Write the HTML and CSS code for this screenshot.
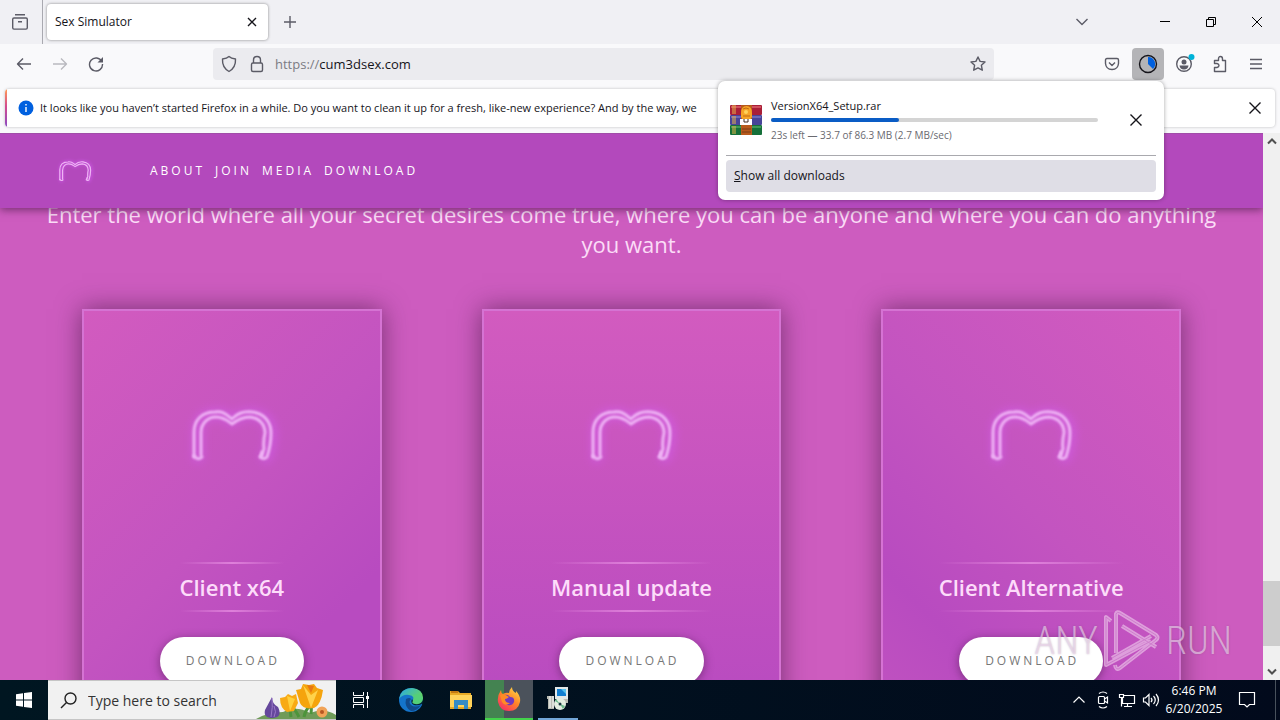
FILE: index.html
```html
<!DOCTYPE html>
<html lang="en">
<head>
<meta charset="utf-8">
<title>Sex Simulator</title>
<link rel="stylesheet" href="styles.css">
</head>
<body>
<svg class="defs" width="0" height="0" aria-hidden="true">
  <symbol id="emblem" viewBox="0 0 110 90">
    <g fill="none" stroke-linejoin="round" stroke-linecap="round">
      <path class="glow" d="M21 67V41Q21 25 38 24Q49 23 55 31Q63 23 75 24Q94 26 94 44Q94 57 89 67"/>
      <path class="neon" d="M17 67V42C17 30 25 22 38 22C47 21 50 25 55 29C60 24 65 21 75 22C87 23 94 32 94 43C94 55 92 61 90 67Q87 70 83 67Q85 66 85 62"/>
      <path class="neon" d="M24 65V43C24 32 32 27 39 27C47 27 51 31 55 34C60 30 65 27 73 27C82 28 88 34 88 43Q86 51 87 59L84 66M17 66Q21 71 25 67"/>
    </g>
  </symbol>
</svg>

<div class="tabs">
  <button class="ib recent" aria-label="View recent browsing"><svg width="18" height="18" viewBox="0 0 18 18"><path d="M4 1.700h10M3 5h12q1.300 0 1.300 1.300v8.500q0 1.300-1.300 1.300H3q-1.300 0-1.300-1.300V6.300Q1.700 5 3 5zM7 8.700h4"/></svg></button>
  <div class="tab"><span>Sex Simulator</span><button class="ib" aria-label="Close tab"><svg width="10" height="10" viewBox="0 0 10 10"><path class="black" d="M1 1l8 8M9 1L1 9"/></svg></button></div>
  <button class="ib plus" aria-label="New tab"><svg width="12" height="12" viewBox="0 0 12 12"><path d="M6 0v12M0 6h12"/></svg></button>
  <button class="ib list" aria-label="List all tabs"><svg width="12" height="8" viewBox="0 0 12 8"><path d="M.5 1L6 6.500 11.500 1"/></svg></button>
  <button class="ib win" aria-label="Minimize"><svg width="10" height="10" viewBox="0 0 10 10"><path class="thin" d="M0 4.500h10"/></svg></button>
  <button class="ib win" aria-label="Restore"><svg width="10" height="10" viewBox="0 0 10 10"><path class="thin" d="M.5 2.500h7v7h-7zM2.500 2.500v-2h7v7h-2"/></svg></button>
  <button class="ib win" aria-label="Close"><svg width="10" height="10" viewBox="0 0 10 10"><path class="thin" d="M0 0l10 10M10 0L0 10"/></svg></button>
</div>

<div class="toolbar">
  <button class="ib nav" aria-label="Back"><svg width="16" height="14" viewBox="0 0 16 14"><path d="M15 7H1.500M7 1.500L1.500 7 7 12.500"/></svg></button>
  <button class="ib nav dim" aria-label="Forward"><svg width="16" height="14" viewBox="0 0 16 14"><path d="M1 7h13.500M9 1.500L14.500 7 9 12.500"/></svg></button>
  <button class="ib nav" aria-label="Reload"><svg width="16" height="16" viewBox="0 0 16 16"><path d="M13.800 5.500A6.500 6.500 0 1 0 14.500 8"/><path d="M15 1v5.500H9.500z" class="fill"/></svg></button>
  <div class="urlbar">
    <svg width="16" height="18" viewBox="0 0 16 18"><path d="M8 1.500Q10 3.500 14.500 4Q15 12.500 8 16.500Q1 12.500 1.500 4Q6 3.500 8 1.500z"/></svg>
    <svg width="16" height="18" viewBox="0 0 16 18"><rect x="2.500" y="8" width="11" height="8.500" rx="1.500"/><path d="M4.500 8V5Q4.500 1.500 8 1.500Q11.500 1.500 11.500 5V8"/></svg>
    <div class="url"><span>https://</span>cum3dsex.com</div>
    <svg width="16" height="16" viewBox="0 0 16 16"><path d="M8 1l2.100 4.400 4.900.6-3.600 3.300.9 4.900L8 11.900l-4.300 2.300.9-4.900L1 6l4.900-.6z"/></svg>
  </div>
  <div class="tools">
    <button class="ib nav" aria-label="Save to Pocket"><svg width="16" height="14" viewBox="0 0 16 14"><path d="M3 1.500h10q1.500 0 1.500 1.500v3.500Q14 12.300 8 12.500Q2 12.300 1.500 6.500V3Q1.500 1.500 3 1.500zM5 5.500l3 3 3-3"/></svg></button>
    <button class="ib dl" aria-label="Downloads"><svg width="20" height="20" viewBox="0 0 20 20"><path d="M10 3v7l5 5A7 7 0 0 0 10 3z" class="blue"/><circle cx="10" cy="10" r="8.500"/></svg></button>
    <button class="ib nav account" aria-label="Account"><svg width="22" height="22" viewBox="0 0 22 22"><circle cx="11" cy="11" r="7.300"/><circle cx="11" cy="9" r="2.500" class="fill"/><path class="fill" d="M6.500 12.500h9q-.5 4-4.500 4t-4.500-4z"/><circle cx="18.500" cy="4" r="3" class="cyan"/></svg></button>
    <button class="ib nav" aria-label="Extensions"><svg width="16" height="18" viewBox="0 0 16 18"><path d="M2.500 5.500h4V4Q6.500 1.500 8.500 1.500T10.500 4v1.500h3v11h-11v-4H5Q7 12 7 10.500T5 8.500H2.500z"/></svg></button>
    <button class="ib nav" aria-label="Menu"><svg width="12" height="12" viewBox="0 0 12 12"><path d="M0 1.500h12M0 6h12M0 10.500h12"/></svg></button>
  </div>
</div>

<div class="notice">
  <svg width="16" height="16" viewBox="0 0 16 16"><circle cx="8" cy="8" r="7.500" class="info"/><path d="M8 7v5M8 4v1.500" class="white"/></svg>
  <p>It looks like you haven’t started Firefox in a while. Do you want to clean it up for a fresh, like-new experience? And by the way, we</p>
  <button class="ib" aria-label="Dismiss"><svg width="12" height="12" viewBox="0 0 12 12"><path class="black" d="M.5.500l11 11M11.500.500l-11 11"/></svg></button>
</div>

<div class="view">
  <main class="site">
    <header class="head">
      <svg class="logo" width="44" height="36"><use href="#emblem"/></svg>
      <nav><a href="#about">ABOUT</a><a href="#join">JOIN</a><a href="#media">MEDIA</a><a href="#download">DOWNLOAD</a></nav>
    </header>
    <section class="body">
      <p class="intro">Enter the world where all your secret desires come true, where you can be anyone and where you can do anything you want.</p>
      <div class="cards">
        <article class="card left"><svg width="110" height="90"><use href="#emblem"/></svg><h2>Client x64</h2><button>DOWNLOAD</button></article>
        <article class="card"><svg width="110" height="90"><use href="#emblem"/></svg><h2>Manual update</h2><button>DOWNLOAD</button></article>
        <article class="card right"><svg width="110" height="90"><use href="#emblem"/></svg><h2>Client Alternative</h2><button>DOWNLOAD</button></article>
      </div>
    </section>
  </main>
  <div class="scroll" aria-hidden="true">
    <svg width="10" height="7" viewBox="0 0 10 7"><path d="M1 5.500l4-4 4 4"/></svg>
    <span class="thumb"></span>
    <svg width="10" height="7" viewBox="0 0 10 7"><path d="M1 1.500l4 4 4-4"/></svg>
  </div>
  <div class="mark" aria-hidden="true"><span>ANY</span>
    <svg width="56" height="62" viewBox="0 0 56 62"><path d="M7 11L2 7V55L47 31M8 48L47 26M12 43V4Q13 1 16 3L52 25Q55 28 52 30L16 58Q12 61 11 55M18 16L52 37"/><path class="inner" d="M7 11L2 7V55L47 31M8 48L47 26M12 43V4Q13 1 16 3L52 25Q55 28 52 30L16 58Q12 61 11 55M18 16L52 37"/></svg>
    <span>RUN</span></div>
</div>

<aside class="popup">
  <div class="item">
    <svg width="32" height="32" viewBox="0 0 32 32">
      <rect x="0" y="1" width="32" height="10" rx="1" fill="#a91f38"/><path d="M1 3h30" stroke="#d0505e" stroke-width="2"/>
      <rect x="0" y="11" width="32" height="10" rx="1" fill="#484498"/><path d="M1 13h30" stroke="#6d69b8" stroke-width="2"/>
      <rect x="0" y="21" width="32" height="10" rx="1" fill="#16703a"/><path d="M1 23h30" stroke="#3f9a58" stroke-width="2"/>
      <path d="M3 1v9M5 1v9M3 12v8M5 12v8M3 22v8M5 22v8" stroke="#e8b84b" stroke-width="1"/>
      <rect x="11" y="1" width="11" height="30" fill="#b75a1c"/><path d="M12 25h9M12 28h9" stroke="#7b3c18"/>
      <path d="M11 9q0-7 5.500-7T22 9v4l-3 4h-5l-3-4z" fill="#f6a426"/><path d="M13 5q3-2 6 0M13 12h7" stroke="#c06a14" fill="none"/><circle cx="16" cy="8" r="2" fill="#ffd35c"/>
      <rect x="10" y="15" width="12" height="6" fill="#fff"/><path d="M14 15v3h4v-3" stroke="#402c25" fill="none"/>
    </svg>
    <div class="info-col">
      <div class="name">VersionX64_Setup.rar</div>
      <div class="bar" role="progressbar" aria-label="Download progress" aria-valuenow="39"><i style="width:39%"></i></div>
      <div class="left-time">23s left — 33.7 of 86.3 MB (2.7 MB/sec)</div>
    </div>
    <button class="ib" aria-label="Cancel"><svg width="12" height="12" viewBox="0 0 12 12"><path class="black" d="M.5.500l11 11M11.500.500l-11 11"/></svg></button>
  </div>
  <button class="all"><u>S</u>how all downloads</button>
</aside>

<footer class="task">
  <button class="start" aria-label="Start"><svg width="16" height="16" viewBox="0 0 16 16"><path fill="#fff" d="M0 2.300l7-1v6.200H0zM8 1.100L16 0v7.500H8zM0 8.500h7v6.200l-7-1zM8 8.500h8V16l-8-1.100z"/></svg></button>
  <label class="search">
    <svg width="17" height="17" viewBox="0 0 17 17"><circle cx="10.500" cy="6.500" r="5.500"/><path d="M6.500 10.500L1 16"/></svg>
    <input type="text" placeholder="Type here to search" aria-label="Search">
    <svg class="flowers" width="80" height="38" viewBox="0 0 80 38">
      <path d="M0 38q12-7 27-7 13-7 27 1 14-6 26 2v4z" fill="#6f9b58"/>
      <path d="M35 36Q34 26 32 24M43 36Q38 26 36 28M55 33Q56 25 54 20M48 36Q50 24 62 22" stroke="#4d943b" stroke-width="3" fill="none"/>
      <path d="M16 16q0 7 6 10 5 10-5 11-10 0-8-8z" fill="#65479c"/><path d="M16 17q1 9-1 19M18 25q3 6 0 11" stroke="#9b79c8" fill="none"/>
      <path d="M24 17l5-1 3-3 4 2 4-2 2 9-4 8-7 1q-7-4-7-14z" fill="#f8aa14"/><path d="M31 15l3 15 5-12" fill="#ffd13d"/>
      <path d="M40 9l5-1 2-5 6 1 5-1 3 4 6 2q-2 15-9 18-11 2-14-5z" fill="#f5a40d"/><path d="M47 4l8 23 7-18-7 5z" fill="#ffd24b"/><path d="M51 4l4 8 3-7" fill="#e87711"/>
      <circle cx="66" cy="31" r="5.500" fill="#f1a357"/><circle cx="66" cy="31" r="2" fill="#b75722"/>
    </svg>
  </label>
  <button class="app" aria-label="Task View"><svg width="16" height="16" viewBox="0 0 16 16"><path class="line" d="M.5 0v3.500h10V0M.5 16v-3.500h10V16M.5 5.500h10v5H.5zM14.500 0v16"/><rect x="13" y="4" width="3" height="3" fill="#fff"/></svg></button>
  <button class="app edge" aria-label="Microsoft Edge"><svg width="26" height="26" viewBox="0 0 26 26"><defs><linearGradient id="ea" x2="1" y2=".6"><stop stop-color="#28a8e8"/><stop offset="1" stop-color="#68d85a"/></linearGradient></defs><circle cx="13" cy="13" r="12" fill="#1474cb"/><path d="M1 12Q3 1 14 1q11 1 11 10 0 6-7 6-5 0-4-2 4-6-3-7Q5 7 1 12z" fill="url(#ea)"/><path d="M8 12q-2 8 5 12 6 0 10-6-6 3-10 0-3-3 0-6-1-2-5 0z" fill="#114a8b"/><path d="M14 12q-2 4 2 6 4 1 8-1l2 2V12h-5q-3 3-6 2z" fill="#001621" opacity=".85"/><path d="M15 8q8-3 10 4-1 6-8 5-4-1-2-3 3-3 0-6z" fill="#54cf79"/></svg></button>
  <button class="app" aria-label="File Explorer"><svg width="22" height="20" viewBox="0 0 22 20"><path d="M0 1h8l2 2h11v16H0z" fill="#e8a925"/><path d="M0 5h22v12H0z" fill="#ffd35b"/><path d="M4 10h14v9h-4v-4H8v4H4z" fill="#358bc5"/><path d="M1 2h7" stroke="#c47912" stroke-width="2"/></svg></button>
  <button class="app firefox" aria-label="Firefox"><svg width="24" height="24" viewBox="0 0 24 24"><defs><linearGradient id="ff" x1=".9" y1="0" x2=".2" y2="1"><stop stop-color="#ffe04a"/><stop offset=".5" stop-color="#ff8427"/><stop offset="1" stop-color="#f72a69"/></linearGradient></defs><path d="M4 3q0 3 2 4 3-2 6-1 0-3 3-6 0 4 4 6v-2q5 5 4 11-2 9-11 9T1 15Q0 9 4 3z" fill="url(#ff)"/><path d="M7 8q4-1 6 2 5 0 4 5-2 4-6 3-5-1-4-10z" fill="#7138bd"/><path d="M3 8q4-2 9 2-2 2-4 2 0 4 5 4-5 4-8-1z" fill="#ff8b25"/></svg></button>
  <button class="app setup" aria-label="Installer"><svg width="22" height="24" viewBox="0 0 22 24"><rect x="8" y="0" width="13" height="12" fill="#e3e8e8"/><rect x="10" y="2" width="9" height="7" fill="#137fd1"/><path d="M14 2l5 5V2z" fill="#56c3ef"/><path d="M0 9h7v13H1V12H0zM13 12h8v4h-8" fill="#b9bbb2"/><path d="M3 9v12M6 9v12" stroke="#fff"/><circle cx="13" cy="17" r="6" fill="#e4eee1"/><path d="M13 17l-5-3 1-2zM13 17l5 2-2 3z" fill="#69b989"/><circle cx="13" cy="17" r="1.500" fill="#1a3740"/></svg></button>
  <div class="tray">
    <svg width="24" height="20" viewBox="0 0 24 20"><path d="M6.500 12.500L12 7l5.500 5.500"/></svg>
    <svg width="24" height="20" viewBox="0 0 24 20"><rect x="7.500" y="6.500" width="6" height="7" rx="1"/><path d="M13.500 9l3-2v6l-3-2M8 3.500q4-3 8 0M8 16.500q4 3 8 0"/></svg>
    <svg width="24" height="20" viewBox="0 0 24 20"><path d="M9 5.500h10.500v8H7.500V8M12.500 13.500v3M9 16.500h8M4.500 4.500h4v3h-4zM6.500 7.500v9"/></svg>
    <svg width="24" height="20" viewBox="0 0 24 20"><path d="M4.500 8h2L10 4.500v11L6.500 12h-2zM12 8q2 2 0 4M14.500 6q3.500 4 0 8M17 4q5 6 0 12"/></svg>
    <div class="clock"><span>6:46 PM</span><span>6/20/2025</span></div>
    <svg class="note" width="18" height="18" viewBox="0 0 18 18"><path d="M1.500 1.500h15v12h-5L9 16l-2.500-2.500h-5z"/></svg>
  </div>
</footer>
</body>
</html>
```
FILE: styles.css
```css
* { box-sizing: border-box; }
body {
  margin: 0;
  height: 100vh;
  display: flex;
  flex-direction: column;
  position: relative;
  overflow: hidden;
  background: #f9f9fb;
  color: #15141a;
  font: 12px/16px "Open Sans", "Noto Sans", sans-serif;
}
.defs { position: absolute; }
button { font: inherit; color: inherit; border: 0; padding: 0; background: none; }
p, h2 { margin: 0; }
svg { flex: none; display: block; }
.ib, .app { display: flex; align-items: center; justify-content: center; flex: none; }
.ib svg, .urlbar svg { fill: none; stroke: #5b5b66; stroke-width: 1.4; stroke-linejoin: round; }
.ib svg .black { stroke: #15141a; }
.ib svg .thin { stroke: #000; stroke-width: 1; }
.ib svg .fill { fill: #5b5b66; stroke: none; }
.ib svg .blue { fill: #0060df; stroke: none; }
.ib svg .cyan { fill: #00b3d9; stroke: none; }

.tabs { flex: none; height: 44px; display: flex; align-items: center; background: #f0f0f4; }
.recent { width: 43px; height: 44px; padding-right: 3px; border-right: 1px solid #a9a9b0; }
.tab {
  width: 221px;
  height: 36px;
  margin-left: 4px;
  padding: 0 11px 0 8px;
  display: flex;
  align-items: center;
  justify-content: space-between;
  background: #fff;
  border-radius: 4px;
  box-shadow: 0 0 3px rgba(0, 0, 0, .45);
}
.plus { width: 44px; height: 36px; }
.list { width: 44px; height: 36px; margin-left: auto; margin-right: 38px; }
.win { width: 46px; height: 44px; }

.toolbar { flex: none; height: 40px; padding: 0 6px; display: flex; align-items: center; }
.nav { width: 36px; height: 32px; }
.dim { opacity: .4; }
.urlbar {
  flex: 1;
  height: 32px;
  margin-left: 99px;
  padding: 0 8px;
  display: flex;
  align-items: center;
  gap: 12px;
  background: #ebebef;
  border-radius: 4px;
}
.url { flex: 1; margin-left: -2px; font-size: 13px; }
.url span { color: #7b7b83; }
.tools { display: flex; margin-left: 100px; }
.dl { width: 32px; height: 32px; margin: 0 2px; background: #b4b4b7; border-radius: 4px; }
.dl svg { stroke: #15141a; }

.notice {
  flex: none;
  height: 38px;
  margin: 5px 5px 6px;
  padding: 0 14px 0 13px;
  display: flex;
  align-items: center;
  gap: 6px;
  position: relative;
  overflow: hidden;
  background: #fff;
  border-radius: 4px;
  box-shadow: 0 0 3px rgba(0, 0, 0, .25);
}
.notice::before { content: ""; position: absolute; left: 0; top: 0; bottom: 0; width: 2px; background: linear-gradient(#ff9a54, #d44b8e 45%, #8a4bc2); }
.notice p { flex: 1; white-space: nowrap; overflow: hidden; font-size: 11px; }
.info { fill: #0060df; }
.white { stroke: #fff; stroke-width: 1.4; }

.view { flex: 1; min-height: 0; display: flex; position: relative; }
.site { flex: 1; min-width: 0; display: flex; flex-direction: column; overflow: hidden; background: #cd5cbf; font-family: "Open Sans", sans-serif; }
.head {
  flex: none;
  height: 75px;
  padding-left: 53px;
  display: flex;
  align-items: center;
  position: relative;
  z-index: 1;
  background: #b349bc;
  border-top: 1px solid #a14da9;
  box-shadow: 0 2px 8px rgba(60, 20, 60, .6);
}
.head nav { display: flex; gap: 10px; margin-left: 53px; }
.head a { color: #fff; text-decoration: none; letter-spacing: 3px; }
.glow { stroke: #d45df2; stroke-width: 13; opacity: .45; filter: blur(4px); }
.neon { stroke: #efb4f5; stroke-width: 3; filter: blur(1px); }
.body { margin-top: -9px; }
.intro { padding: 0 32px; font-size: 22px; line-height: 30px; text-align: center; color: #fbdcf7; }
.cards { display: grid; grid-template-columns: repeat(3, 1fr); gap: 100px; padding: 50px 82px 40px; }
.card {
  height: 400px;
  padding-top: 79px;
  display: flex;
  flex-direction: column;
  align-items: center;
  border: 2px solid #d573d3;
  background: linear-gradient(180deg, #d25bbf, #b84bc0);
  box-shadow: 0 0 24px rgba(60, 20, 60, .6);
}
.card.left { background-image: linear-gradient(135deg, #d25bbf, #c354c0 50%, #b84bc0 80%); }
.card.right { background-image: linear-gradient(225deg, #d25bbf, #c354c0 50%, #b84bc0 80%, #c052c0); }
.card h2 { margin: 82px 0 25px; font-size: 22px; line-height: 46px; font-weight: 600; color: #fddcfa; }
.card h2::before, .card h2::after { content: ""; display: block; height: 2px; background: linear-gradient(90deg, transparent, #de80da 50%, transparent); }
.card button {
  height: 48px;
  padding: 0 24px 0 26px;
  border-radius: 24px;
  background: #fff;
  color: #777;
  letter-spacing: 3px;
  box-shadow: 0 2px 10px rgba(60, 20, 60, .5);
}
.scroll {
  flex: none;
  width: 17px;
  padding: 5px 0;
  display: flex;
  flex-direction: column;
  align-items: center;
  justify-content: space-between;
  background: #f0f0f0;
}
.scroll svg { fill: none; stroke: #505050; stroke-width: 2; }
.thumb { width: 17px; height: 65px; margin: auto 0 22px; background: #cdcdcd; }
.mark {
  position: absolute;
  right: 48px;
  bottom: 8px;
  z-index: 2;
  display: flex;
  align-items: center;
  gap: 6px;
  color: rgba(240, 220, 240, .6);
  font: 300 38px/62px "Roboto Condensed", "Liberation Sans Narrow", "Liberation Sans", sans-serif;
  text-shadow: 0 0 2px rgba(120, 80, 120, .4);
}
.mark svg { fill: none; stroke: #e6b2e3; stroke-width: 4; stroke-linejoin: round; opacity: .8; }
.mark .inner { stroke: #d18ad0; stroke-width: 1; }

.popup {
  position: absolute;
  top: 81px;
  right: 116px;
  z-index: 3;
  width: 446px;
  padding: 8px;
  background: #fff;
  border-radius: 7px;
  box-shadow: 0 0 4px rgba(0, 0, 0, .35);
}
.item { height: 67px; padding: 0 14px 4px 4px; display: flex; align-items: center; gap: 9px; border-bottom: 1px solid #a9a9ae; }
.info-col { flex: 1; margin-right: 23px; }
.bar { height: 4px; margin: 4px 0 5px; background: #d4d4d4; border-radius: 2px; }
.bar i { display: block; height: 100%; background: #0a5cc5; border-radius: 2px; }
.left-time { font-size: 10px; color: #6a6a70; }
.name { font-size: 11px; }
.all { display: block; width: 100%; height: 32px; margin-top: 4px; padding: 0 8px; text-align: left; background: #dfdee6; border-radius: 4px; }

.task { flex: none; height: 40px; display: flex; background: linear-gradient(90deg, #001621, #020a1c); }
.start { width: 48px; display: flex; align-items: center; justify-content: center; }
.search { width: 288px; display: flex; align-items: center; padding-left: 12px; background: #f1f1f1; border: solid #c5c5c5; border-width: 1px 0; }
.search > svg:first-child { fill: none; stroke: #222; stroke-width: 1.4; }
.search input { flex: 1; min-width: 0; padding: 0 0 0 11px; border: 0; background: none; font: 14px "Open Sans", sans-serif; }
.search input::placeholder { color: #333; opacity: 1; }
.flowers { align-self: flex-end; }
.app { width: 49px; height: 40px; }
.edge { width: 51px; }
.line { fill: none; stroke: #fff; }
.firefox { width: 48px; background: linear-gradient(90deg, #448351 40%, #4b525b 40%); border-bottom: 2px solid #43d24b; }
.setup { width: 40px; margin-left: 5px; border-bottom: 2px solid #72a6d7; }
.tray { margin-left: auto; padding-right: 4px; display: flex; align-items: center; color: #fff; }
.tray svg { fill: none; stroke: #fff; stroke-width: 1.2; }
.clock { width: 62px; display: flex; flex-direction: column; text-align: center; line-height: 18px; }
.tray .note { margin: 0 19px 0 13px; }
.tray::after { content: ""; height: 40px; border-right: 1px solid #48515c; }
```
